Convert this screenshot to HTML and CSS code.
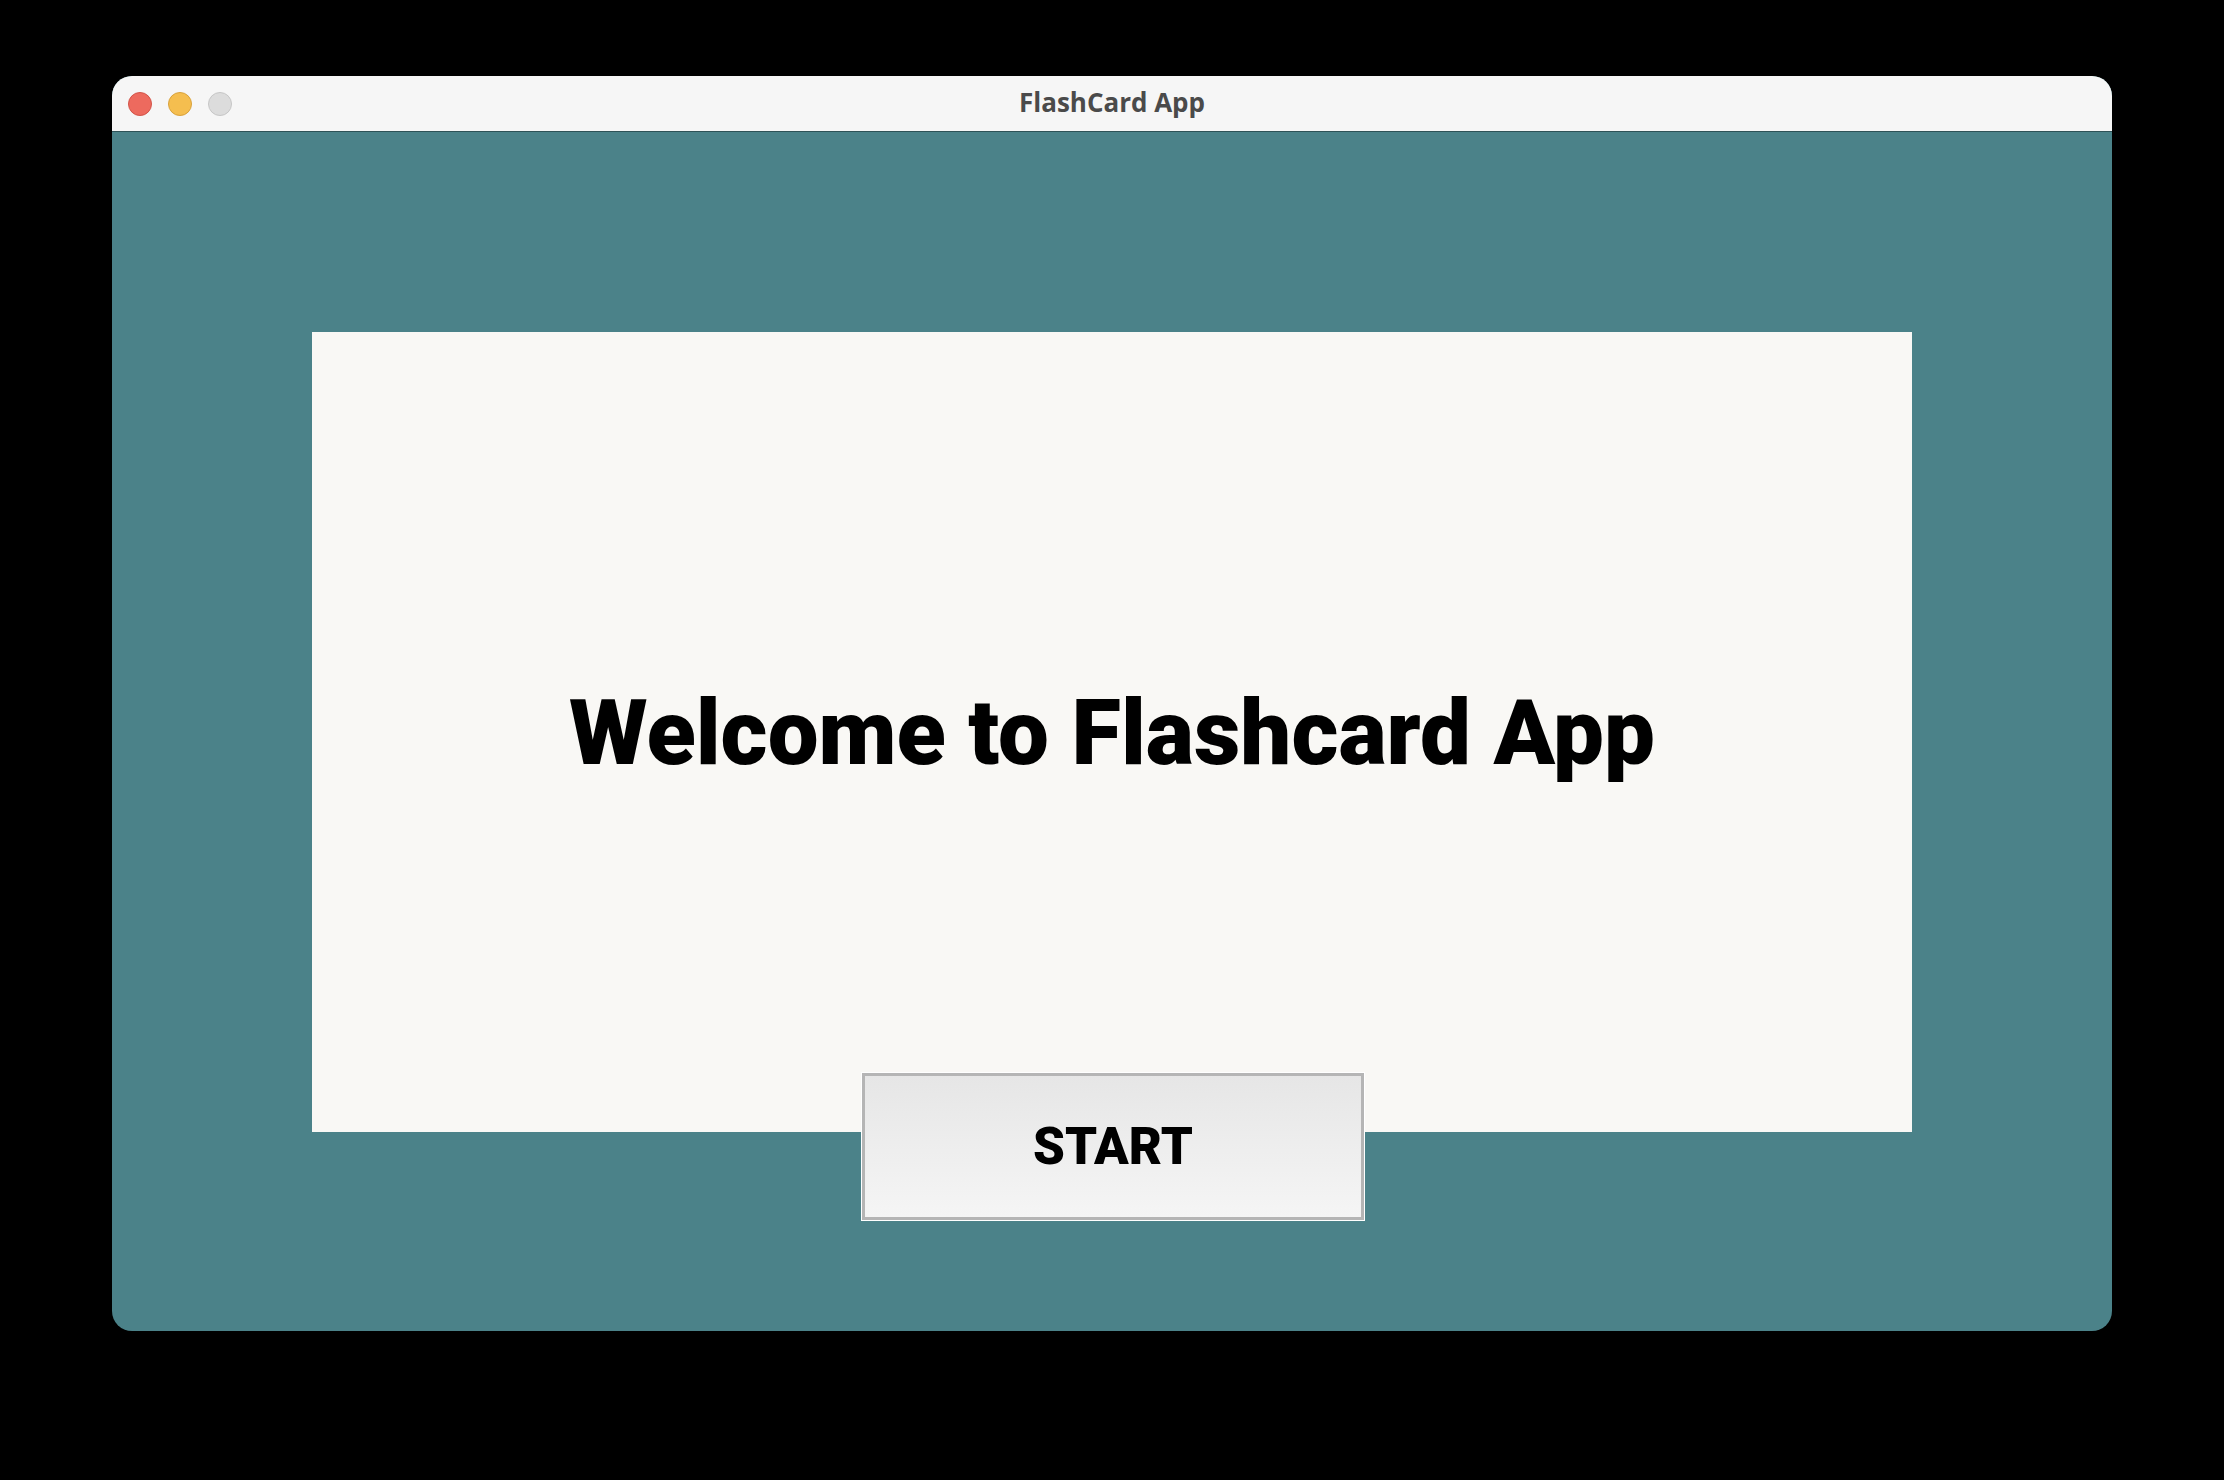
FILE: index.html
```html
<!DOCTYPE html>
<html>
<head>
<meta charset="utf-8">
<title>FlashCard App</title>
<link rel="stylesheet" href="styles.css">
</head>
<body>
<div class="window">
  <div class="titlebar">
    <div class="lights">
      <span class="light red"></span>
      <span class="light yellow"></span>
      <span class="light gray"></span>
    </div>
    <div class="title">FlashCard App</div>
  </div>
  <div class="content">
    <div class="card">
      <h1 class="welcome">Welcome to Flashcard App</h1>
    </div>
    <button class="start">START</button>
  </div>
</div>
</body>
</html>
```

FILE: styles.css
```css
html, body {
  margin: 0;
  padding: 0;
  background: #000;
}
body {
  width: 2224px;
  height: 1480px;
  box-sizing: border-box;
  padding: 76px 0 0 112px;
}
.window {
  width: 2000px;
  height: 1255px;
  border-radius: 20px;
  overflow: hidden;
  display: flex;
  flex-direction: column;
  background: #4b8289;
}
.titlebar {
  height: 55px;
  flex: none;
  background: #f6f6f6;
  border-bottom: 1px solid #2e5257;
  position: relative;
  display: flex;
  align-items: center;
  justify-content: center;
}
.lights {
  position: absolute;
  left: 16px;
  top: 16px;
  display: flex;
  gap: 16px;
}
.light {
  width: 22px;
  height: 22px;
  border-radius: 50%;
  border: 1px solid rgba(0,0,0,0.12);
}
.red { background: #ed6a5e; border-color: #d25449; }
.yellow { background: #f5be4f; border-color: #d8a23c; }
.gray { background: #dcdcdc; border-color: #c6c6c6; }
.title {
  font-family: "Open Sans", "Liberation Sans", sans-serif;
  font-weight: 700;
  font-size: 26px;
  color: #4a4a4a;
  margin-top: -4px;
}
.content {
  flex: 1;
  display: flex;
  flex-direction: column;
  align-items: center;
  padding-top: 200px;
}
.card {
  width: 1600px;
  height: 800px;
  flex: none;
  background: #f9f8f5;
  display: flex;
  align-items: center;
  justify-content: center;
}
.welcome {
  margin: 0;
  font-family: Roboto, "Liberation Sans", sans-serif;
  font-weight: 900;
  font-size: 90.5px;
  color: #000;
  letter-spacing: 0;
  margin-top: 2px;
}
.start {
  position: relative;
  margin-top: -59px;
  margin-left: 2px;
  width: 502px;
  height: 147px;
  box-sizing: border-box;
  border: 3px solid #b5b5b5;
  outline: 1px solid #ffffff;
  background: linear-gradient(to bottom, #e6e6e6, #f5f5f5);
  font-family: Roboto, "Liberation Sans", sans-serif;
  font-weight: 900;
  font-size: 51px;
  color: #000;
  padding: 0;
}
```
